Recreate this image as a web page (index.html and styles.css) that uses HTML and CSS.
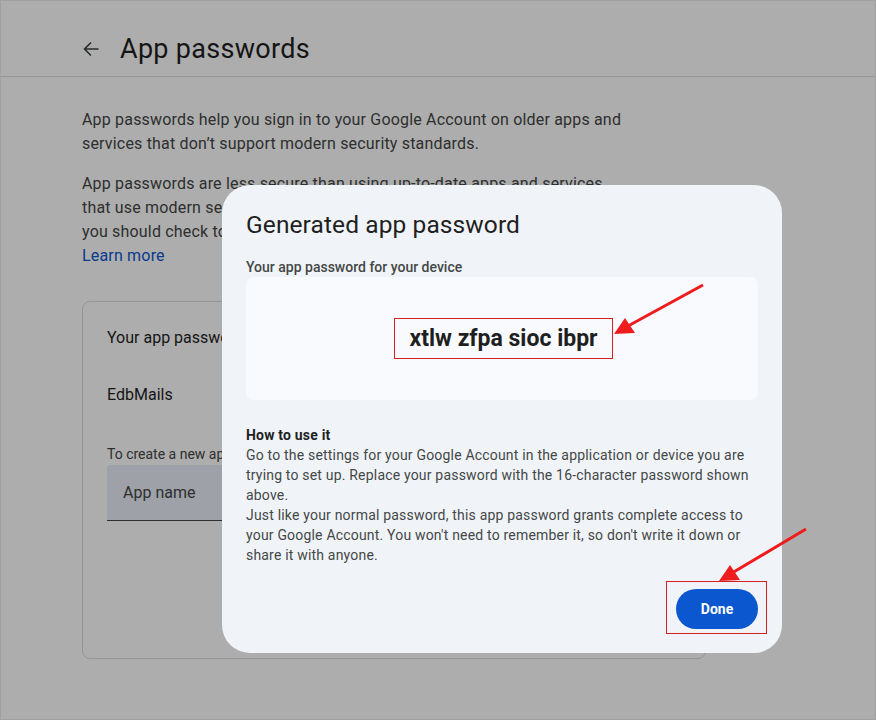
FILE: index.html
```html
<!DOCTYPE html>
<html lang="en">
<head>
    <meta charset="UTF-8">
    <meta name="viewport" content="width=device-width, initial-scale=1.0">
    <title>App passwords</title>
    <link rel="stylesheet" href="styles.css">
</head>
<body>
    <div class="page">
        <header class="topbar">
            <svg class="back" width="16" height="16" viewBox="0 0 16 16">
                <path d="M15.5 8H1.5M8 1.5L1.5 8L8 14.5" fill="none" stroke="#3c4043" stroke-width="1.6"/>
            </svg>
            <h1>App passwords</h1>
        </header>

        <main class="content">
            <p>App passwords help you sign in to your Google Account on older apps and services that don’t support modern security standards.</p>
            <p>App passwords are less secure than using up-to-date apps and services that use modern security standards. Before you create an app password, you should check to see if your app needs this in order to sign in.
                <a href="#" class="learn">Learn more</a>
            </p>

            <section class="card">
                <div class="card-title">Your app passwords</div>
                <div class="app-row">EdbMails</div>
                <div class="hint">To create a new app specific password, type a name for it below...</div>
                <div class="field">App name</div>
            </section>
        </main>
    </div>

    <div class="scrim">
        <div class="dialog">
            <h2>Generated app password</h2>
            <div class="label">Your app password for your device</div>
            <div class="pw-box">
                <span class="pw">xtlw zfpa sioc ibpr</span>
            </div>

            <div class="how">
                <div class="how-title">How to use it</div>
                <div>Go to the settings for your Google Account in the application or device you are trying to set up. Replace your password with the 16-character password shown above.</div>
                <div>Just like your normal password, this app password grants complete access to your Google Account. You won't need to remember it, so don't write it down or share it with anyone.</div>
            </div>

            <div class="actions">
                <div class="done-wrap">
                    <button class="done">Done</button>
                    <span class="mark"></span>
                </div>
            </div>
        </div>
    </div>

    <svg class="arrows" width="876" height="720" viewBox="0 0 876 720">
        <line x1="703" y1="285" x2="628" y2="326" stroke="#ee1c1c" stroke-width="3"/>
        <polygon points="614,334 625,318 635,333" fill="#ee1c1c"/>
        <line x1="806" y1="529" x2="732" y2="573" stroke="#ee1c1c" stroke-width="3"/>
        <polygon points="719,581 730,565 740,580" fill="#ee1c1c"/>
    </svg>
</body>
</html>
```

FILE: styles.css
```css
body {
    margin: 0;
    font-family: Roboto, "Noto Sans", Arial, sans-serif;
    color: #1f1f1f;
    background: #ffffff;
}
.page {
    height: 718px;
    border: 1px solid #ececec;
    overflow: hidden;
}
.topbar {
    height: 55px;
    padding-top: 20px;
    display: flex;
    align-items: center;
    padding-left: 82px;
    border-bottom: 1px solid #dadce0;
}
.back {
    margin-right: 21px;
    margin-top: 1px;
}
.topbar h1 {
    margin: 0;
    font-size: 27px;
    font-weight: 400;
    letter-spacing: 0.3px;
}
.content {
    padding: 31px 0 0 81px;
    width: 548px;
}
.content p {
    margin: 0 0 16px;
    font-size: 16px;
    line-height: 24px;
    color: #444746;
    letter-spacing: 0.18px;
}
.learn {
    display: block;
    color: #0b57d0;
    text-decoration: none;
}
.card {
    margin-top: 33px;
    width: 574px;
    height: 332px;
    border: 1px solid #dadce0;
    border-radius: 8px;
    padding: 24px 24px 0;
}
.card-title {
    font-size: 16px;
    line-height: 24px;
}
.app-row {
    margin-top: 33px;
    font-size: 16px;
    line-height: 24px;
}
.hint {
    margin-top: 37px;
    font-size: 14px;
    line-height: 20px;
    color: #444746;
}
.field {
    margin-top: 1px;
    width: 384px;
    height: 55px;
    line-height: 55px;
    padding-left: 16px;
    background: #e9eef6;
    border-bottom: 1px solid #444746;
    border-radius: 4px 4px 0 0;
    font-size: 16px;
    color: #444746;
}
.scrim {
    position: fixed;
    inset: 0;
    background: rgba(0, 0, 0, 0.32);
    padding: 185px 0 0 222px;
}
.dialog {
    width: 512px;
    padding: 24px;
    background: #f0f4f9;
    border-radius: 28px;
}
.dialog h2 {
    margin: 0;
    font-size: 24.5px;
    line-height: 32px;
    font-weight: 400;
    letter-spacing: 0.1px;
}
.label {
    margin-top: 16px;
    font-size: 14px;
    line-height: 20px;
    font-weight: 500;
    color: #444746;
}
.pw-box {
    height: 123px;
    background: #f8fafd;
    border-radius: 8px;
    display: flex;
    align-items: center;
    justify-content: center;
}
.pw {
    font-size: 23px;
    font-weight: 700;
    line-height: 39px;
    padding: 0 14px;
    border: 1px solid #d42020;
    margin-left: 3px;
    color: #1f1f1f;
}
.how {
    margin-top: 25px;
    font-size: 14px;
    line-height: 20px;
    color: #444746;
    letter-spacing: 0.19px;
}
.how-title {
    font-weight: 700;
    color: #1f1f1f;
}
.actions {
    margin-top: 24px;
    display: flex;
    justify-content: flex-end;
}
.done-wrap {
    position: relative;
}
.done {
    display: block;
    width: 82px;
    height: 40px;
    border: none;
    border-radius: 20px;
    background: #0b57d0;
    color: #ffffff;
    font-family: Roboto, Arial, sans-serif;
    font-size: 14px;
    font-weight: 700;
}
.mark {
    position: absolute;
    top: -8px;
    right: -9px;
    bottom: -5px;
    left: -10px;
    border: 1px solid #d42020;
}
.arrows {
    position: fixed;
    top: 0;
    left: 0;
}
```
